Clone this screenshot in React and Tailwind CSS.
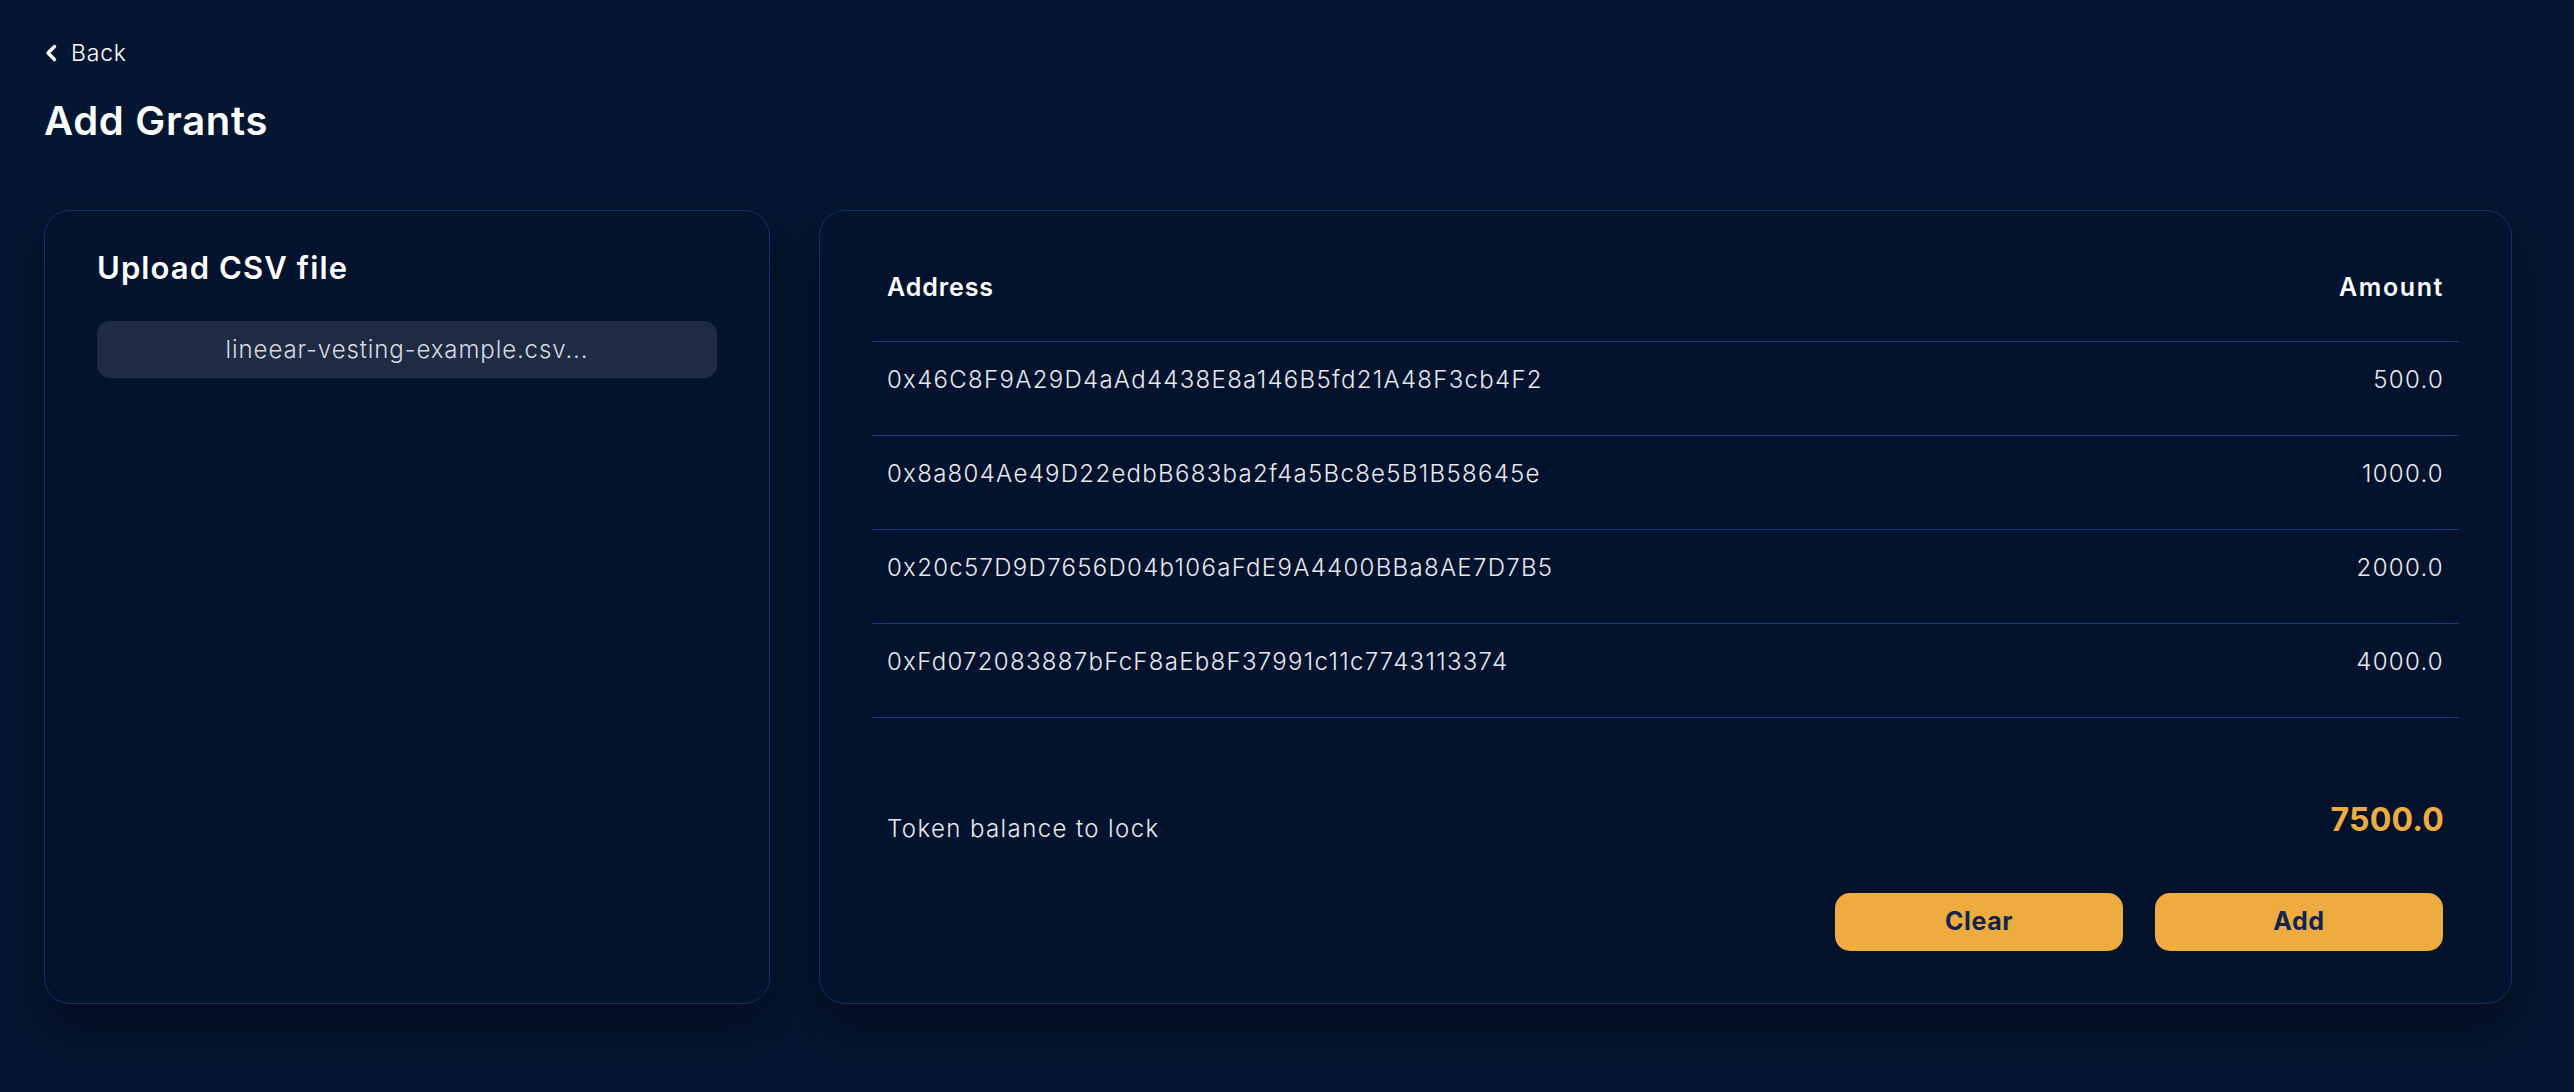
import React from "react";

const rows = [
  ["0x46C8F9A29D4aAd4438E8a146B5fd21A48F3cb4F2", "500.0"],
  ["0x8a804Ae49D22edbB683ba2f4a5Bc8e5B1B58645e", "1000.0"],
  ["0x20c57D9D7656D04b106aFdE9A4400BBa8AE7D7B5", "2000.0"],
  ["0xFd072083887bFcF8aEb8F37991c11c7743113374", "4000.0"],
];

export default function App() {
  return (
    <div className="min-h-screen w-full bg-[#051632] font-['Inter','Liberation_Sans',sans-serif] text-white pl-[44px] pr-[62px] pt-[38px] pb-[60px]">
      <div className="flex h-[30px] items-center gap-[13px] text-[23px] font-light leading-[30px] tracking-[0.8px]">
        <svg width="14" height="18" viewBox="0 0 14 18" fill="none">
          <polyline
            points="10.5,2.5 4,9 10.5,15.5"
            stroke="white"
            strokeWidth="3.4"
            strokeLinecap="round"
            strokeLinejoin="round"
          />
        </svg>
        <span>Back</span>
      </div>
      <h1 className="mt-[28px] text-[40px] font-semibold leading-[50px] tracking-[0.7px]">Add Grants</h1>

      <div className="mt-[64px] flex gap-[49px]">
        <div className="h-[794px] w-[726px] shrink-0 rounded-[26px] border border-[#12306a] bg-[#03132d] px-[52px] pt-[37px] shadow-[0_24px_50px_rgba(0,0,0,0.45)]">
          <h2 className="text-[31px] font-semibold leading-[40px] tracking-[1.1px]">Upload CSV file</h2>
          <div className="mt-[33px] flex h-[57px] items-center justify-center rounded-[13px] bg-[#1f2b42] text-[24px] font-light tracking-[0.9px] text-[#d6dae2]">
            lineear-vesting-example.csv...
          </div>
        </div>

        <div className="flex h-[794px] flex-1 flex-col rounded-[26px] border border-[#12306a] bg-[#03132d] px-[52px] pt-[58px] shadow-[0_24px_50px_rgba(0,0,0,0.45)]">
          <div className="flex justify-between border-b border-[#163a80] px-[15px] pb-[36px] text-[25px] font-semibold leading-[36px]">
            <span className="tracking-[0.9px]">Address</span>
            <span className="tracking-[1.6px]">Amount</span>
          </div>
          {rows.map(([addr, amt]) => (
            <div
              key={addr}
              className="flex justify-between border-b border-[#163a80] px-[15px] pt-[20px] pb-[37px] text-[24px] font-light leading-[36px] tracking-[1.3px] text-[#e8eaf0]"
            >
              <span>{addr}</span>
              <span>{amt}</span>
            </div>
          ))}

          <div className="mt-[80px] flex items-start justify-between px-[15px]">
            <span className="mt-[13px] text-[24px] font-light leading-[36px] tracking-[1.4px] text-[#e8eaf0]">
              Token balance to lock
            </span>
            <span className="text-[32px] font-bold leading-[44px] tracking-[0.2px] text-[#eeab40]">7500.0</span>
          </div>

          <div className="mt-[46px] flex justify-end gap-[32px] pr-[16px]">
            <button className="flex h-[58px] w-[288px] items-center justify-center rounded-[15px] bg-[#eeab40] text-[25px] font-bold tracking-[0.6px] text-[#10244f]">
              Clear
            </button>
            <button className="flex h-[58px] w-[288px] items-center justify-center rounded-[15px] bg-[#eeab40] text-[25px] font-bold tracking-[0.6px] text-[#10244f]">
              Add
            </button>
          </div>
        </div>
      </div>
    </div>
  );
}
